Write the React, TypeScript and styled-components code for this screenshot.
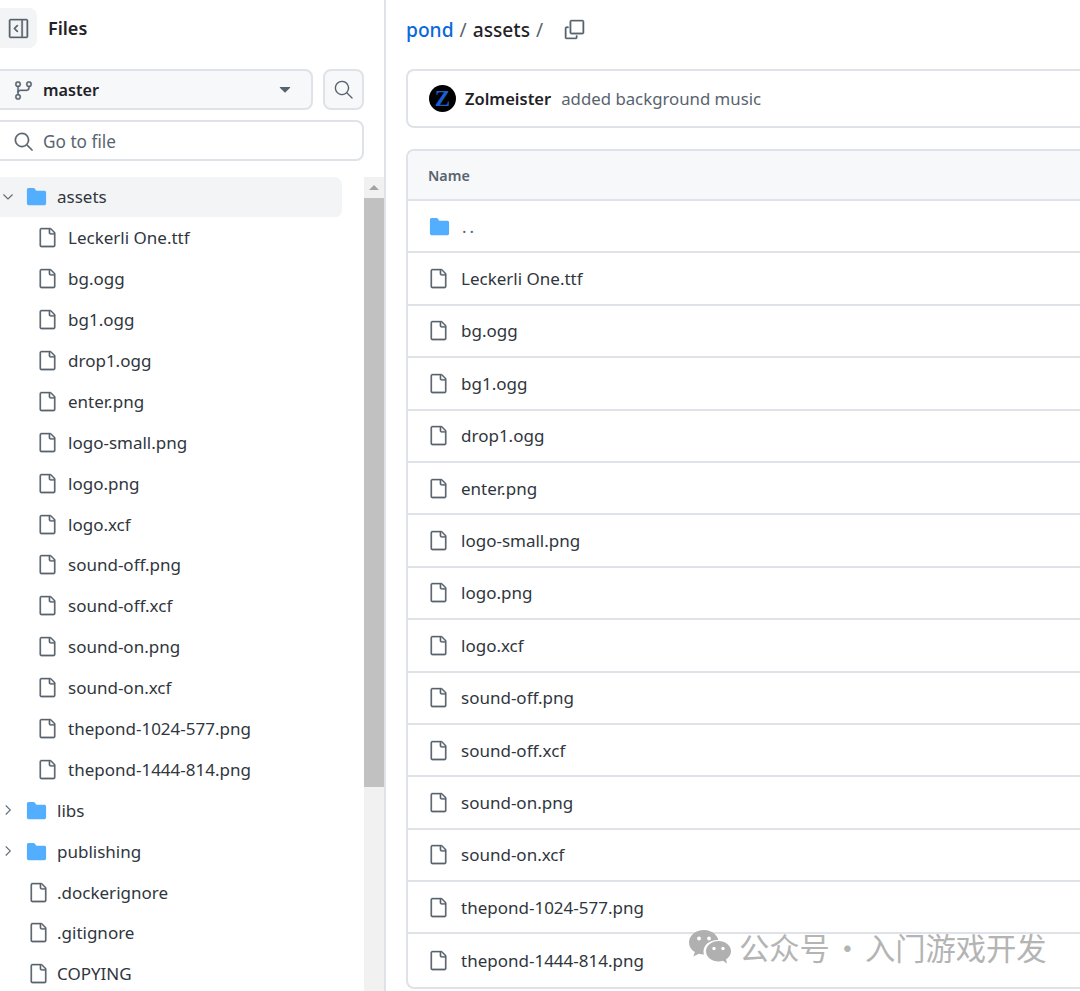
import React from "react";
import styled, { createGlobalStyle } from "styled-components";
import {
  GoChevronDown,
  GoChevronRight,
  GoCopy,
  GoFile,
  GoFileDirectoryFill,
  GoGitBranch,
  GoSearch,
  GoSidebarExpand,
  GoTriangleDown,
} from "react-icons/go";

const lineColor = "#dfe3e9";

const GlobalStyle = createGlobalStyle`
  html, body {
    margin: 0;
    padding: 0;
    background: #fff;
    overflow: hidden;
  }
  body {
    font-family: "Noto Sans", "Liberation Sans", sans-serif;
    color: #1f2328;
  }
  svg.heavy {
    stroke: currentColor;
    stroke-width: 0.35;
  }
`;

const Page = styled.div`
  display: flex;
  width: 1080px;
  height: 991px;
  overflow: hidden;
`;

const Sidebar = styled.aside`
  flex: none;
  width: 384px;
  height: 991px;
  border-right: 2px solid ${lineColor};
  display: flex;
  flex-direction: column;
  overflow: hidden;
`;

const SideHeader = styled.div`
  display: flex;
  align-items: center;
  gap: 11px;
  height: 40px;
  margin-top: 8px;
`;

const ToggleBtn = styled.div`
  width: 37px;
  height: 40px;
  border-radius: 0 8px 8px 0;
  background: #f3f4f6;
  color: #59636e;
  display: flex;
  align-items: center;
  justify-content: center;
  font-size: 23px;
`;

const SideTitle = styled.div`
  font-size: 18px;
  font-weight: 600;
`;

const BranchRow = styled.div`
  display: flex;
  gap: 10px;
  margin: 21px 20px 0 -8px;
`;

const BranchBtn = styled.div`
  flex: 1;
  height: 41px;
  box-sizing: border-box;
  border: 2px solid ${lineColor};
  border-radius: 8px;
  background: #f6f8fa;
  display: flex;
  align-items: center;
  padding: 1px 16px 0 19px;
  font-size: 16.2px;
  font-weight: 600;
  & > svg:first-child {
    color: #59636e;
    font-size: 21px;
    margin-right: 9px;
  }
  & > svg:last-child {
    margin-left: auto;
    color: #59636e;
    font-size: 20px;
  }
`;

const SearchBtn = styled.div`
  flex: none;
  width: 41px;
  height: 41px;
  box-sizing: border-box;
  border: 2px solid ${lineColor};
  border-radius: 8px;
  background: #f6f8fa;
  color: #59636e;
  display: flex;
  align-items: center;
  justify-content: center;
  font-size: 21px;
`;

const GoToFile = styled.div`
  height: 41px;
  box-sizing: border-box;
  margin: 10px 20px 0 -8px;
  border: 2px solid ${lineColor};
  border-radius: 8px;
  display: flex;
  align-items: center;
  gap: 9px;
  padding: 1px 0 0 19px;
  color: #59636e;
  font-size: 17.2px;
  & > svg {
    font-size: 21px;
  }
`;

const TreeArea = styled.div`
  flex: 1;
  min-height: 0;
  display: flex;
  margin-top: 16px;
`;

const TreeList = styled.ul`
  flex: 1;
  list-style: none;
  margin: 0;
  padding: 0;
  overflow: hidden;
`;

const TreeRow = styled.li<{ $depth: number; $active?: boolean }>`
  width: 342px;
  height: 40.9px;
  box-sizing: border-box;
  padding-bottom: 1px;
  display: flex;
  align-items: center;
  font-size: 17px;
  color: #30363d;
  white-space: nowrap;
  padding-left: ${(p) => (p.$depth ? 37 : 28)}px;
  background: ${(p) =>
    p.$active ? "linear-gradient(#f3f4f6, #f3f4f6) 0 0 / 100% 40px no-repeat" : "none"};
  border-radius: 0 8px 8px 0;
  & > svg.file {
    flex: none;
    font-size: 21px;
    color: #59636e;
    margin-right: ${(p) => (p.$depth ? 10 : 8)}px;
  }
`;

const FolderRow = styled(TreeRow)`
  padding-left: 0;
  & > svg.chev {
    flex: none;
    width: 16px;
    font-size: 16px;
    color: #59636e;
    margin-right: 9px;
  }
  & > svg.dir {
    flex: none;
    font-size: 23px;
    color: #54aeff;
    margin-right: 9px;
  }
`;

const Scrollbar = styled.div`
  flex: none;
  width: 20px;
  background: #f1f1f1;
  display: flex;
  flex-direction: column;
`;

const ScrollArrow = styled.div`
  height: 21px;
  display: flex;
  align-items: center;
  justify-content: center;
  &::before {
    content: "";
    border-left: 5px solid transparent;
    border-right: 5px solid transparent;
    border-bottom: 5px solid #a3a3a3;
  }
`;

const ScrollThumb = styled.div`
  height: 589px;
  background: #c1c1c1;
`;

const Main = styled.main`
  flex: none;
  width: 800px;
  padding-left: 20px;
  box-sizing: border-box;
`;

const Breadcrumb = styled.div`
  height: 58px;
  display: flex;
  align-items: center;
  font-size: 19.2px;
  font-weight: 500;
  color: #1f2328;
`;

const CrumbLink = styled.span`
  color: #0969da;
`;

const CrumbSep = styled.span`
  color: #59636e;
  font-weight: 400;
  margin: 0 6px;
`;

const CopyIcon = styled.span`
  display: flex;
  margin-left: 14px;
  color: #59636e;
  font-size: 23px;
`;

const CommitBar = styled.div`
  height: 59px;
  margin-top: 11px;
  box-sizing: border-box;
  border: 2px solid ${lineColor};
  border-right: none;
  border-radius: 8px 0 0 8px;
  display: flex;
  align-items: center;
  padding-left: 21px;
  font-size: 16.8px;
`;

const Avatar = styled.div`
  width: 27px;
  height: 27px;
  border-radius: 50%;
  background: #000;
  color: #1a5fd0;
  font-family: "Liberation Serif", serif;
  font-weight: 700;
  font-size: 23px;
  line-height: 27px;
  text-align: center;
  margin-right: 9px;
`;

const Author = styled.span`
  font-size: 16.5px;
  font-weight: 600;
  margin-right: 10px;
`;

const CommitMsg = styled.span`
  color: #59636e;
`;

const FileTable = styled.div`
  margin-top: 21px;
  border: 2px solid ${lineColor};
  border-right: none;
  border-radius: 8px 0 0 8px;
  overflow: hidden;
`;

const TableHead = styled.div`
  height: 50px;
  box-sizing: border-box;
  background: #f6f8fa;
  border-bottom: 2px solid ${lineColor};
  display: flex;
  align-items: center;
  padding-left: 20px;
  font-size: 14.3px;
  font-weight: 600;
  color: #59636e;
`;

const TableRow = styled.div`
  height: 52.4px;
  box-sizing: border-box;
  border-bottom: 2px solid ${lineColor};
  display: flex;
  align-items: center;
  padding-left: 20px;
  font-size: 17px;
  color: #30363d;
  &:last-child {
    border-bottom: none;
  }
  & > svg {
    font-size: 21px;
    color: #59636e;
    margin-right: 12px;
  }
  & > svg.dir {
    font-size: 23px;
    color: #54aeff;
    margin-right: 11px;
  }
`;

const DotDot = styled.span`
  letter-spacing: 3px;
  color: #59636e;
`;

const Watermark = styled.div`
  position: absolute;
  left: 689px;
  top: 928px;
  display: flex;
  align-items: center;
  gap: 8px;
  color: #b4b4b4;
  font-family: "Noto Sans CJK SC", sans-serif;
  font-size: 30.3px;
  line-height: 38px;
  white-space: nowrap;
`;

const WatermarkDot = styled.span`
  display: inline-block;
  width: 35px;
  text-align: center;
`;

const assetFiles = [
  "Leckerli One.ttf",
  "bg.ogg",
  "bg1.ogg",
  "drop1.ogg",
  "enter.png",
  "logo-small.png",
  "logo.png",
  "logo.xcf",
  "sound-off.png",
  "sound-off.xcf",
  "sound-on.png",
  "sound-on.xcf",
  "thepond-1024-577.png",
  "thepond-1444-814.png",
];

function WeChatIcon() {
  return (
    <svg width="42" height="34" viewBox="0 0 42 34" fill="#b0b0b0">
      <path d="M15 0C6.800 0 0 5.500 0 12.400c0 4 2.300 7.400 5.800 9.700L4.400 26.600l5.400-2.900c1.600.5 3.300.8 5.200.9-.3-1-.5-2-.5-3.100 0-6.500 6.200-11.600 13.900-11.600h1C27.800 4.200 22 0 15 0Z" />
      <path d="M42 21.200C42 15.500 36.400 11 29.600 11S17 15.500 17 21.200s5.600 10.200 12.600 10.200c1.500 0 2.900-.2 4.200-.6l4.300 2.600-1.100-4.100c3-2 5-4.800 5-8.100Z" />
      <g fill="#fff">
        <circle cx="10" cy="8.500" r="1.900" />
        <circle cx="20" cy="8.500" r="1.900" />
        <circle cx="25" cy="18.500" r="1.700" />
        <circle cx="34" cy="18.500" r="1.700" />
      </g>
    </svg>
  );
}

function App() {
  return (
    <Page>
      <GlobalStyle />
      <Sidebar>
        <SideHeader>
          <ToggleBtn>
            <GoSidebarExpand className="heavy" />
          </ToggleBtn>
          <SideTitle>Files</SideTitle>
        </SideHeader>
        <BranchRow>
          <BranchBtn>
            <GoGitBranch className="heavy" />
            master
            <GoTriangleDown />
          </BranchBtn>
          <SearchBtn>
            <GoSearch />
          </SearchBtn>
        </BranchRow>
        <GoToFile>
          <GoSearch className="heavy" />
          Go to file
        </GoToFile>
        <TreeArea>
          <TreeList>
            <FolderRow $depth={0} $active>
              <GoChevronDown className="chev heavy" />
              <GoFileDirectoryFill className="dir" />
              assets
            </FolderRow>
            {assetFiles.map((name) => (
              <TreeRow key={name} $depth={1}>
                <GoFile className="file heavy" />
                {name}
              </TreeRow>
            ))}
            <FolderRow $depth={0}>
              <GoChevronRight className="chev heavy" />
              <GoFileDirectoryFill className="dir" />
              libs
            </FolderRow>
            <FolderRow $depth={0}>
              <GoChevronRight className="chev heavy" />
              <GoFileDirectoryFill className="dir" />
              publishing
            </FolderRow>
            {[".dockerignore", ".gitignore", "COPYING"].map((name) => (
              <TreeRow key={name} $depth={0}>
                <GoFile className="file heavy" />
                {name}
              </TreeRow>
            ))}
          </TreeList>
          <Scrollbar>
            <ScrollArrow />
            <ScrollThumb />
          </Scrollbar>
        </TreeArea>
      </Sidebar>
      <Main>
        <Breadcrumb>
          <CrumbLink>pond</CrumbLink>
          <CrumbSep>/</CrumbSep>
          assets
          <CrumbSep>/</CrumbSep>
          <CopyIcon>
            <GoCopy className="heavy" />
          </CopyIcon>
        </Breadcrumb>
        <CommitBar>
          <Avatar>Z</Avatar>
          <Author>Zolmeister</Author>
          <CommitMsg>added background music</CommitMsg>
        </CommitBar>
        <FileTable>
          <TableHead>Name</TableHead>
          <TableRow>
            <GoFileDirectoryFill className="dir" />
            <DotDot>..</DotDot>
          </TableRow>
          {assetFiles.map((name) => (
            <TableRow key={name}>
              <GoFile className="heavy" />
              {name}
            </TableRow>
          ))}
        </FileTable>
      </Main>
      <Watermark>
        <WeChatIcon />
        <span>
          公众号<WatermarkDot>·</WatermarkDot>入门游戏开发
        </span>
      </Watermark>
    </Page>
  );
}

export default App;
